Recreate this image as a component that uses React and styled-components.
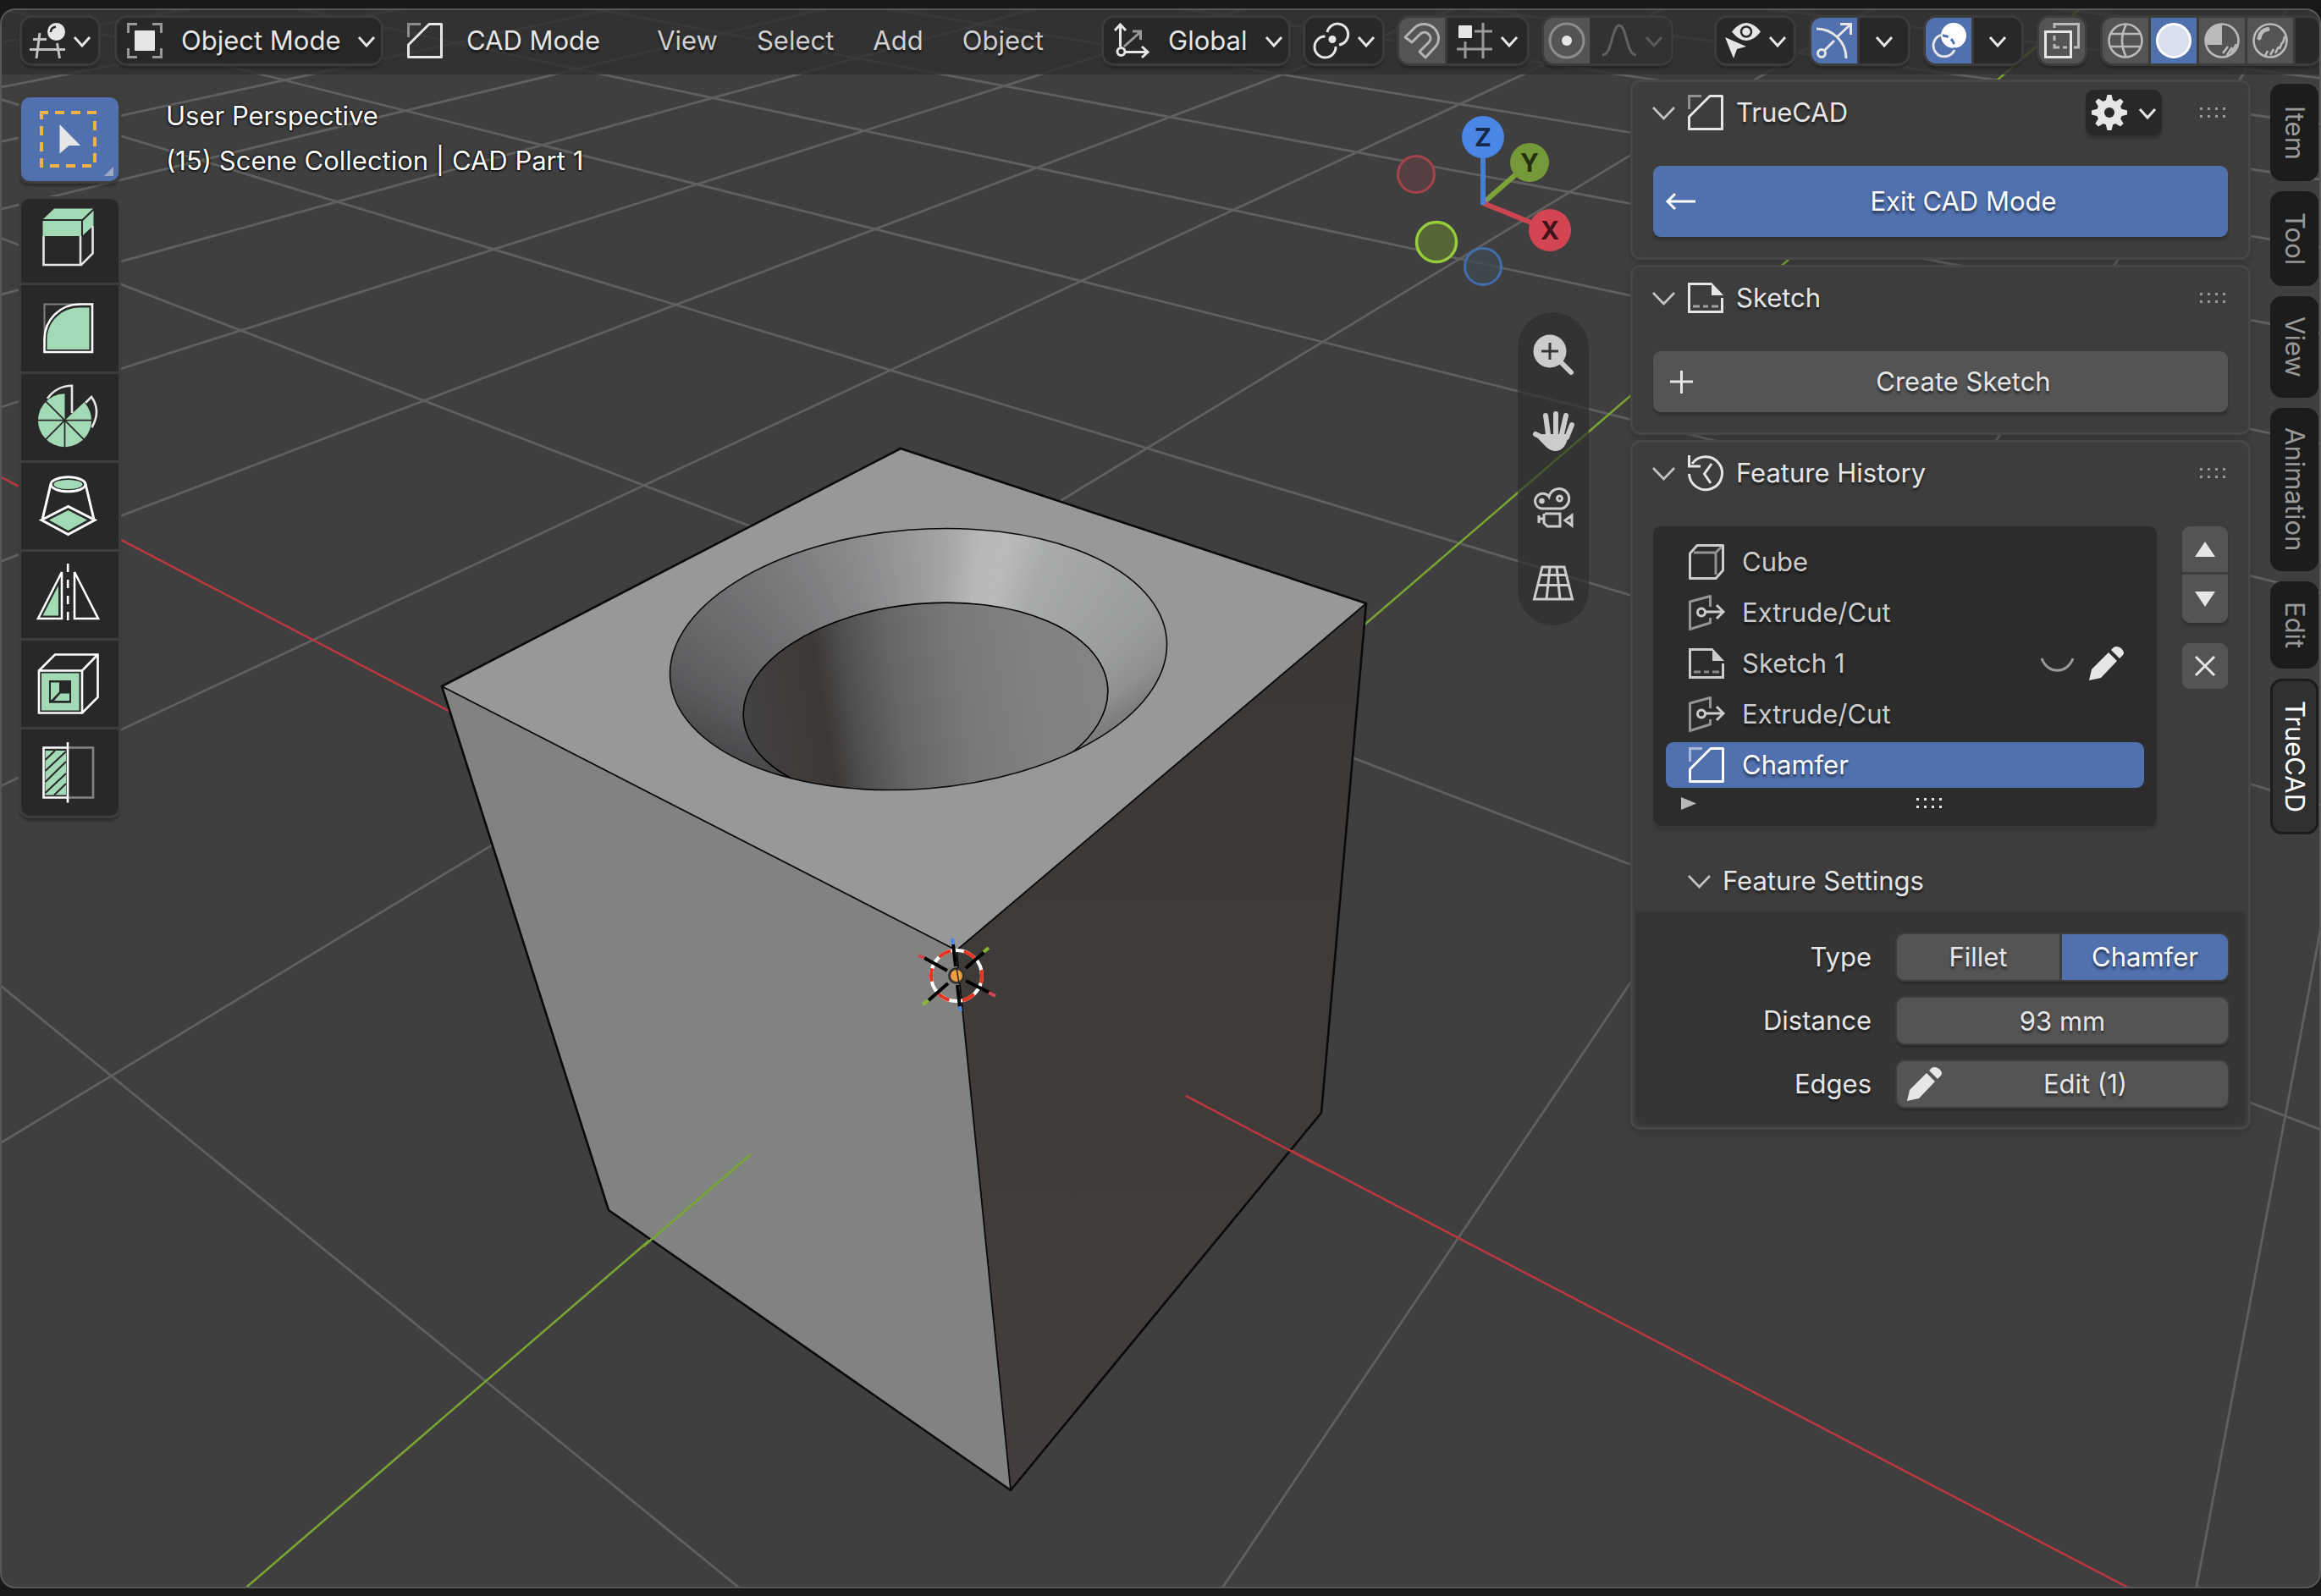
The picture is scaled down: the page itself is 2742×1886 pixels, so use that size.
import { useState } from 'react'
import styled, { createGlobalStyle, css } from 'styled-components'

const GlobalStyle = createGlobalStyle`
  * {
    box-sizing: border-box;
  }
  body {
    margin: 0;
    background: #181818;
    color: #e6e6e6;
    font-family: Inter, 'Liberation Sans', sans-serif;
    font-size: 31px;
    line-height: 40px;
  }
  button,
  input {
    margin: 0;
    padding: 0;
    border: 0;
    background: none;
    color: inherit;
    font: inherit;
    text-shadow: inherit;
  }
  svg {
    display: block;
    flex: none;
  }
`

/* ---------- window frame ---------- */

const Window = styled.div`
  display: flex;
  flex-direction: column;
  min-height: 100vh;
  padding: 10px 0 9px;
`

const Viewport = styled.main`
  position: relative;
  display: flex;
  flex: 1;
  flex-direction: column;
  overflow: hidden;
  border: 2px solid #585858;
  border-radius: 18px;
  background: #3f3f3f;
`

const SceneSvg = styled.svg`
  position: absolute;
  inset: 0;
  width: 100%;
  height: 100%;
`

const Body = styled.div`
  position: relative;
  display: flex;
  align-items: flex-start;
  padding: 6px 1px 0 23px;
`

/* ---------- header ---------- */

const Header = styled.header`
  position: relative;
  display: flex;
  align-items: center;
  height: 76px;
  padding: 0 0 4px 24px;
  background: rgba(48, 48, 48, 0.8);
  text-shadow: 0 3px 3px rgba(0, 0, 0, 0.6);
  white-space: nowrap;
`

const HeaderGroup = styled.div`
  display: flex;
  align-items: center;
  gap: ${({ $gap }) => $gap || 21}px;
  margin-left: ${({ $push }) => ($push ? 'auto' : '0')};
  margin-right: ${({ $after }) => $after || 0}px;
`

const Segments = styled.div`
  display: flex;
  gap: 3px;
  height: 54px;
  border-radius: 12px;
  background: ${({ $disabled }) => ($disabled ? '#343434' : '#3b3b3b')};
  box-shadow: 0 0 0 3px #3c3c3c, 0 4px 3px 2px rgba(0, 0, 0, 0.25);
`

const Segment = styled.button`
  display: flex;
  align-items: center;
  justify-content: center;
  gap: 10px;
  width: ${({ $width }) => $width}px;
  background: ${({ $tone }) =>
    ({ dark: '#282828', light: '#545454', active: '#5070ae', off: '#323232' })[$tone || 'dark']};

  &:first-child {
    border-radius: 12px 0 0 12px;
  }
  &:last-child {
    border-radius: 0 12px 12px 0;
  }
  &:only-child {
    border-radius: 12px;
  }
`

const SegmentText = styled.span`
  flex: 1;
  margin-left: 12px;
  text-align: left;
`

const WideSegment = styled(Segment)`
  padding: 0 7px 0 12px;
`

const ModeLabel = styled.div`
  display: flex;
  align-items: center;
  gap: 28px;
  margin: 0 67px 0 31px;
`

const Menus = styled.nav`
  display: flex;
  gap: 46px;
  color: #d0d0d0;
`

/* ---------- tools on the left ---------- */

const Tools = styled.div`
  display: flex;
  flex-direction: column;
  gap: 21px;
  width: 115px;
  margin-top: 21px;
`

const ToolGroup = styled.div`
  display: flex;
  flex-direction: column;
  gap: 3px;
  border-radius: 10px;
  background: #3d3d3d;
  box-shadow: 0 0 0 3px #3d3d3d, 0 4px 3px 2px rgba(0, 0, 0, 0.3);
`

const Tool = styled.button`
  position: relative;
  display: flex;
  align-items: center;
  justify-content: center;
  height: 102px;
  padding-right: 2px;
  background: ${({ $active }) => ($active ? '#5070ae' : '#282828')};

  &:first-child {
    height: 99px;
    border-radius: 10px 10px 0 0;
  }
  &:last-child {
    border-radius: 0 0 10px 10px;
  }
  &:only-child {
    border-radius: 10px;
  }
`

const MoreCorner = styled.span`
  position: absolute;
  right: 6px;
  bottom: 6px;
  width: 11px;
  height: 11px;
  background: #9da9c2;
  clip-path: polygon(100% 0, 100% 100%, 0 100%);
`

const SceneInfo = styled.div`
  flex: 1;
  margin: 16px 0 0 56px;
  color: #fff;
  line-height: 53px;
  text-shadow: 0 0 3px #000, 0 1px 3px #000;
`

/* ---------- gizmo and navigation ---------- */

const NavColumn = styled.div`
  display: flex;
  flex-direction: column;
  width: 227px;
  margin: 42px 49px 0 0;
`

const NavPill = styled.div`
  display: flex;
  flex-direction: column;
  align-items: center;
  gap: 42px;
  align-self: flex-end;
  width: 84px;
  margin-top: 31px;
  padding: 26px 0;
  border-radius: 42px;
  background: rgba(45, 45, 45, 0.65);
`

const NavButton = styled.button`
  width: 48px;
  height: 48px;
`

/* ---------- sidebar ---------- */

const Sidebar = styled.aside`
  display: flex;
  flex-direction: column;
  gap: 6px;
  width: 733px;
  text-shadow: 0 3px 3px rgba(0, 0, 0, 0.55);
`

const PanelBox = styled.section`
  border: 3px solid #474747;
  border-radius: 12px;
  background: #3d3d3d;
  box-shadow: 0 3px 8px rgba(0, 0, 0, 0.2);
`

const PanelHeader = styled.div`
  display: flex;
  align-items: center;
  gap: 15px;
  height: 72px;
  padding: 0 27px 0 23px;
`

const PanelTitle = styled.span`
  flex: 1;
`

const PanelBody = styled.div`
  padding: 27px 24px 24px;
`

const DropButton = styled.button`
  display: flex;
  align-items: center;
  justify-content: center;
  gap: 14px;
  width: 90px;
  height: 54px;
  margin-right: 30px;
  border-radius: 10px;
  background: #282828;
  box-shadow: 0 4px 3px rgba(0, 0, 0, 0.2);
`

const ActionButton = styled.button`
  display: flex;
  align-items: center;
  width: 100%;
  height: ${({ $tall }) => ($tall ? 84 : 72)}px;
  padding-left: 12px;
  border-radius: 9px;
  background: ${({ $primary }) => ($primary ? '#5070ae' : '#545454')};
  color: ${({ $primary }) => ($primary ? '#fff' : '#e6e6e6')};
  box-shadow: 0 4px 3px rgba(0, 0, 0, 0.2);

  span {
    flex: 1;
  }
`

const HistoryArea = styled.div`
  display: flex;
  gap: 30px;
  padding: 27px 24px 0;
`

const FeatureList = styled.div`
  display: flex;
  flex: 1;
  flex-direction: column;
  gap: 6px;
  padding: 15px 15px 0;
  border-radius: 9px;
  background: #2c2c2c;
  box-shadow: 0 5px 2px #373737;
  color: #cccccc;
`

const FeatureRow = styled.div`
  display: flex;
  align-items: center;
  height: 54px;
  padding: 0 23px 0 27px;
  border-radius: 9px;

  ${({ $selected }) =>
    $selected &&
    css`
      background: #5070ae;
      color: #fff;
    `}
`

const FeatureName = styled.button`
  display: flex;
  flex: 1;
  align-items: center;
  gap: 21px;
`

const RowActions = styled.div`
  display: flex;
  align-items: center;
  gap: 18px;
  color: #e6e6e6;
`

const ListFooter = styled.div`
  display: flex;
  align-items: center;
  justify-content: space-between;
  height: 39px;
  padding: 0 239px 15px 18px;
`

const ListSide = styled.div`
  display: flex;
  flex-direction: column;
  gap: 24px;
  width: 54px;
  color: #e6e6e6;
`

const SideStack = styled.div`
  display: flex;
  flex-direction: column;
  gap: 3px;
  box-shadow: 0 4px 3px rgba(0, 0, 0, 0.2);
  border-radius: 9px;
`

const SideButton = styled.button`
  display: flex;
  align-items: center;
  justify-content: center;
  height: ${({ $height }) => $height || 54}px;
  border-radius: ${({ $round }) => $round || '9px'};
  background: #545454;
`

const SettingsHeader = styled.div`
  display: flex;
  align-items: center;
  gap: 14px;
  height: 72px;
  margin-top: 29px;
  padding-left: 65px;
`

const Settings = styled.div`
  display: flex;
  flex-direction: column;
  gap: 21px;
  margin: 0 3px 3px;
  padding: 27px 21px 21px;
  border-radius: 0 0 10px 10px;
  background: #353535;
`

const Field = styled.div`
  display: grid;
  grid-template-columns: 1fr 391px;
  gap: 30px;
  align-items: center;
  height: 54px;

  label,
  > span {
    text-align: right;
  }
`

const fieldBox = css`
  width: 100%;
  height: 54px;
  border-radius: 9px;
  background: #545454;
  box-shadow: 0 0 0 2px #3d3d3d, 0 4px 2px 1px rgba(0, 0, 0, 0.2);
`

const Switch = styled.div`
  ${fieldBox}
  display: grid;
  grid-template-columns: 192px 1fr;
  gap: 3px;
  background: #3d3d3d;
`

const SwitchOption = styled.button`
  background: ${({ $on }) => ($on ? '#5070ae' : '#545454')};
  color: ${({ $on }) => ($on ? '#fff' : '#e6e6e6')};

  &:first-child {
    border-radius: 9px 0 0 9px;
  }
  &:last-child {
    border-radius: 0 9px 9px 0;
  }
`

const NumberInput = styled.input`
  ${fieldBox}
  text-align: center;
`

const EditButton = styled.button`
  ${fieldBox}
  display: flex;
  align-items: center;
  padding-left: 12px;

  span {
    flex: 1;
  }
`

/* ---------- tabs ---------- */

const Tabs = styled.nav`
  display: flex;
  flex-direction: column;
  gap: 12px;
  width: 57px;
  margin: 5px 0 0 23px;
`

const Tab = styled.button`
  display: flex;
  align-items: center;
  justify-content: center;
  height: ${({ $height }) => $height}px;
  border: 3px solid #1c1c1c;
  border-radius: 14px;
  background: ${({ $active }) => ($active ? '#303030' : '#1c1c1c')};
  color: ${({ $active }) => ($active ? '#fff' : '#999')};
  writing-mode: vertical-rl;
`

/* ---------- icons ---------- */

const Icon = ({ w = 42, h = 42, sw = 3, children }) => (
  <svg
    width={w}
    height={h}
    viewBox={`0 0 ${w} ${h}`}
    fill='none'
    stroke='currentColor'
    strokeWidth={sw}
    overflow='visible'
    aria-hidden='true'
  >
    {children}
  </svg>
)

const Chevron = () => (
  <Icon w={20} h={14}>
    <path d='M1 3 10 13 19 3' />
  </Icon>
)

const PanelChevron = () => (
  <Icon w={27} h={15}>
    <path d='M1 1 13.500 14 26 1' stroke='#c4c4c4' strokeWidth='2.600' />
  </Icon>
)

const ChamferIcon = () => (
  <Icon>
    <path d='M16 1.500H1.500V17' opacity='0.5' />
    <path d='M26 1.500H40.500V40.500H1.500V26Z' strokeLinejoin='round' />
  </Icon>
)

const SketchIcon = () => (
  <Icon h={36}>
    <path d='M28 1.500H1.500V34.500H40.500V18' />
    <path d='M28 0 42 15H28Z' fill='currentColor' stroke='none' />
    <path d='M6 28H14M18 28H24M28 28H36' opacity='0.6' />
  </Icon>
)

const HistoryIcon = () => (
  <Icon>
    <path d='M1.500 22A19.500 19.500 0 1 0 5 10' />
    <path d='M1.500 0V13H15' />
    <path d='M28 10 19.500 22 27 33' />
  </Icon>
)

const CubeIcon = () => (
  <Icon>
    <path d='M1.500 11 10 1.500H40.500V31L32 40.500H1.500Z' strokeLinejoin='round' />
    <path d='M6 10H32V36M32 10 39 3' opacity='0.65' />
  </Icon>
)

const ExtrudeIcon = () => (
  <Icon>
    <path d='M25.500 14V1.500L1.500 8V40.500L25.500 33V27' opacity='0.65' strokeLinejoin='round' />
    <circle cx='15' cy='20.500' r='4.500' />
    <path d='M20 20H40M33 12 41 20 33 28' />
  </Icon>
)

const PencilIcon = () => (
  <Icon>
    <path
      d='M0 41 3 28 23 8 33 18 14 38ZM26 5 29 2C35-2 44 7 40 11L36 15Z'
      fill='currentColor'
      stroke='none'
    />
  </Icon>
)

const ClosedEyeIcon = () => (
  <Icon w={39} h={18}>
    <path d='M1 3C8 22 31 22 38 3' stroke='#999' />
  </Icon>
)

const GearIcon = () => (
  <Icon>
    <g fill='currentColor' stroke='none'>
      {[0, 45, 90, 135].map((angle) => (
        <path
          key={angle}
          d='M18.500 0H23.500L25.500 8V34L23.500 42H18.500L16.500 34V8Z'
          transform={`rotate(${angle} 21 21)`}
        />
      ))}
      <circle cx='21' cy='21' r='15' />
    </g>
    <circle cx='21' cy='21' r='6' fill='#282828' stroke='none' />
  </Icon>
)

const DragDots = ({ color = '#999' }) => (
  <Icon w={30} h={12}>
    <g fill={color} stroke='none'>
      {[0, 9, 18, 27].map((x) => (
        <path key={x} d={`M${x} 0h3v3h-3zM${x} 9h3v3h-3z`} />
      ))}
    </g>
  </Icon>
)

const EditorIcon = () => (
  <Icon>
    <path d='M12 12 8 42M32.500 24 35.500 42M4 19.500H20M0 31.500H42' stroke='#c0c0c0' />
    <circle cx='31.500' cy='10.500' r='10.500' fill='currentColor' stroke='none' />
    <path d='M25 11C25 7 28 5 31 4.500' stroke='#282828' strokeWidth='2.500' />
  </Icon>
)

const ObjectIcon = () => (
  <Icon>
    <path
      d='M1.500 12V1.500H12M30 1.500H40.500V12M40.500 30V40.500H30M12 40.500H1.500V30'
      stroke='#999'
    />
    <rect x='9' y='9' width='24' height='24' rx='1' fill='currentColor' stroke='none' />
  </Icon>
)

const AxesIcon = () => (
  <Icon>
    <path d='M12 28 31 11M22 10H31.500V20' stroke='#999' />
    <path d='M7.500 28V2M1 9 7.500 2 14 9M14 34.500H40M33 28 40 34.500 33 41' />
    <circle cx='8.500' cy='34' r='4.500' />
  </Icon>
)

const PivotIcon = () => (
  <Icon>
    <path d='M16 11A12.500 12.500 0 1 1 30 26M13.500 16A12.500 12.500 0 1 0 26 28' />
    <circle cx='22' cy='19.500' r='4.500' fill='currentColor' stroke='none' />
  </Icon>
)

const MagnetIcon = () => (
  <Icon>
    <path
      d='M1 17 12 6C18 0 28 0 35 6C42 13 42 22 37 28L25 41 18 34 29 23C35 17 26 7 19 13L9 23Z'
      stroke='#b4b4b4'
      strokeLinejoin='round'
    />
  </Icon>
)

const SnapIcon = () => (
  <Icon>
    <path d='M31 0V42M21 10H42M0 31H42M10 22V42' stroke='#999' />
    <rect x='2' y='3' width='16' height='15' rx='1' fill='currentColor' stroke='none' />
  </Icon>
)

const ProportionalIcon = () => (
  <Icon>
    <circle cx='21' cy='21' r='20' stroke='#8c8c8c' />
    <circle cx='21' cy='21' r='6' fill='#e6e6e6' stroke='none' />
  </Icon>
)

const FalloffIcon = () => (
  <Icon>
    <path d='M1 38C13 38 12 3 21 3S29 38 41 38' stroke='#606060' />
  </Icon>
)

const VisibilityIcon = () => (
  <Icon>
    <path
      d='M8 10.500Q16 0 25 0T42 10.500Q34 21 25 21T8 10.500Z'
      fill='currentColor'
      stroke='none'
    />
    <circle cx='25' cy='10.500' r='6' stroke='#282828' strokeWidth='2.500' />
    <path d='M0 17 25 28 14 31 10 42Z' fill='currentColor' stroke='none' />
  </Icon>
)

const GizmoIcon = () => (
  <Icon>
    <path d='M0 7C19 7 35 22 35 42M9 33 21 21M25 16 40 2M28 1.500H40.500V14' />
    <circle cx='6' cy='36' r='4.500' />
  </Icon>
)

const OverlayIcon = () => (
  <Icon>
    <circle cx='27' cy='15' r='15' fill='#fff' stroke='none' />
    <path d='M14 14A13 13 0 1 0 28 32' />
    <path d='M14 15A14 14 0 0 1 28 30' stroke='#5070ae' strokeDasharray='7 4' />
  </Icon>
)

const XrayIcon = () => (
  <Icon>
    <path d='M12 6V1.500H40.500V29H35' opacity='0.7' />
    <rect x='1.500' y='10.500' width='30' height='30' />
    <path d='M12 15V21M12 25V29H18M22 29H27' opacity='0.7' />
  </Icon>
)

const WireIcon = () => (
  <Icon sw={2.6}>
    <g stroke='#bababa'>
      <circle cx='21' cy='21' r='19.500' />
      <path d='M22 1.500Q12 21 22 40.500M4 13H38M4 28H38' />
    </g>
  </Icon>
)

const SolidIcon = () => (
  <Icon>
    <circle cx='21' cy='21' r='19.500' fill='#d8dfee' stroke='#fff' />
  </Icon>
)

const MaterialIcon = () => (
  <Icon sw={2.6}>
    <g stroke='#bababa'>
      <circle cx='21' cy='21' r='19.500' />
      <path d='M21 1.500V26H2A19.500 19.500 0 0 1 21 1.500Z' fill='#bababa' stroke='none' />
      <path d='M22 36 28 28M27 38 33 29M32 36 38 25' />
    </g>
  </Icon>
)

const RenderedIcon = () => (
  <Icon sw={2.6}>
    <g stroke='#bababa'>
      <circle cx='21' cy='21' r='19.500' />
      <path d='M8 18C9 12 13 8 18 7.500' strokeWidth='5' strokeLinecap='round' />
      <path d='M15 39 18 33M21 38 25 31M27 36 31 28M32 31 35 23M36 24 38 16' />
    </g>
  </Icon>
)

const ToolIcon = ({ children }) => (
  <Icon w={78} h={78} sw={2.6}>
    {children}
  </Icon>
)

const GREEN = '#a3dab6'

const polar = (cx, cy, r, deg) => {
  const rad = ((deg - 90) * Math.PI) / 180
  return `${cx + r * Math.cos(rad)} ${cy + r * Math.sin(rad)}`
}

const toolIcons = {
  Extrude: (
    <ToolIcon>
      <g fill={GREEN} stroke='none'>
        <path d='M8 13 21 .5H67L54 13ZM7.500 15H53V33H7.500ZM55 15 67.500 3V20.500L55 32Z' />
      </g>
      <path d='M8.500 33V67H53L66.500 53.500V21M52 33V67' stroke='#e6e6e6' />
    </ToolIcon>
  ),
  Fillet: (
    <ToolIcon>
      <path d='M9.500 54V10.500H52' stroke='#808080' strokeWidth='2' />
      <path d='M51 10.500H66V67H9.500V52C9.500 29 28 10.500 51 10.500Z' stroke='#fff' />
      <path d='M51 14.500H62.500V64H12.500V52C12.500 31 30 14.500 51 14.500Z' fill={GREEN} stroke='none' />
    </ToolIcon>
  ),
  Revolve: (
    <ToolIcon>
      <path d='M13 17C20 7 31 1.700 42 1.700V34M58 22 65 15C73 26 73 38 65.500 51' stroke='#e6e6e6' />
      <path
        d={`M33.500 42.700 L${polar(33.5, 42.7, 31.5, 47)} A31.500 31.500 0 1 1 ${polar(33.5, 42.7, 31.5, 0)}Z`}
        fill={GREEN}
        stroke='none'
      />
      {[90, 135, 180, 225, 270, 315].map((deg) => (
        <path
          key={deg}
          d={`M33.500 42.700 L${polar(33.5, 42.7, 33, deg)}`}
          stroke='#282828'
          strokeWidth='1.800'
        />
      ))}
    </ToolIcon>
  ),
  Loft: (
    <ToolIcon>
      <g stroke='#fff' strokeWidth='3'>
        <ellipse cx='37.500' cy='13.300' rx='20.500' ry='8.500' />
        <path d='M17 13 7 55M58 13 68 55M6 55.500 37.500 39.500 69 55.500 37.500 72.500Z' />
      </g>
      <ellipse cx='37.500' cy='13.500' rx='17' ry='5.500' fill={GREEN} stroke='none' />
      <path d='M15 55.500 37.500 44 60 55.500 37.500 68Z' fill={GREEN} stroke='none' />
    </ToolIcon>
  ),
  Mirror: (
    <ToolIcon>
      <path d='M30 12V67H2ZM45 12V67H73Z' stroke='#fff' />
      <path d='M37.200 2V69' stroke='#fff' strokeDasharray='10 9' />
      <path d='M26 28V63.500H7.500Z' fill={GREEN} stroke='none' />
    </ToolIcon>
  ),
  Shell: (
    <ToolIcon>
      <path d='M3 23.500H54V73.500H3ZM3 23.500 22 4.500H72.500V55L54 73.500M54 23.500 72.500 4.500' stroke='#fff' />
      <g fill={GREEN} stroke='none'>
        <path d='M6 26.500H50.500V70.500H6ZM15 35V61.700H41V35Z' fillRule='evenodd' />
        <path d='M17 37.500H27V48.500L18 58H17ZM21 59 28.500 50.500H39V59Z' />
      </g>
    </ToolIcon>
  ),
  Section: (
    <ToolIcon>
      <path d='M37 9.500H67V68.500H37' stroke='#858585' />
      <path d='M10.500 13H35V65.500H10.500Z' fill={GREEN} stroke='none' />
      <path
        d='M10.500 24 22 13M10.500 37 35 14M10.500 50 35 26M10.500 63 35 40M21 65.500 35 52'
        stroke='#282828'
        strokeWidth='2'
      />
      <path d='M37 9.500H8.500V68.500H37M37 3V74.500' stroke='#fff' />
    </ToolIcon>
  ),
}

const SelectIcon = () => (
  <ToolIcon>
    <rect
      x='6'
      y='7'
      width='63'
      height='63'
      stroke='#f3b344'
      strokeWidth='4'
      strokeDasharray='11 8'
      strokeDashoffset='3'
    />
    <path d='M27.500 21 52 46H38.500L27.500 55.500Z' fill='#e6e6e6' stroke='none' />
  </ToolIcon>
)

/* ---------- 3D scene ---------- */

// ground plane to screen: X and Y are the images of the unit steps,
// A and B the perspective divisors of each direction
const ORIGIN = [1130, 1153.3]
const X_STEP = [322, 79.6]
const Y_STEP = [685.5, -111]
const A = -0.1572
const B = 0.2254

const project = (u, v) => {
  const d = 1 + A * u + B * v
  return [
    (ORIGIN[0] + u * X_STEP[0] + v * Y_STEP[0]) / d,
    (ORIGIN[1] + u * X_STEP[1] + v * Y_STEP[1]) / d,
  ]
}

const NEAR = 0.12
const FAR = 60

const range = (from, to) => Array.from({ length: to - from + 1 }, (_, i) => from + i)

const gridLine = (fixed, value) => {
  const [p, q] =
    fixed === 'u'
      ? [project(value, (NEAR - 1 - A * value) / B), project(value, FAR)]
      : [project((NEAR - 1 - B * value) / A, value), project(-FAR, value)]
  return `M${p.join(' ')}L${q.join(' ')}`
}

// shading of the chamfered rim, in degrees around the tip of its cone
const TIP = [1110, 975]
const RIM = [
  [-120, 72, 72, 75],
  [-71, 75, 75, 78],
  [-66, 82, 82, 85],
  [-60, 93, 93, 96],
  [-48, 107, 107, 110],
  [-31, 123, 124, 126],
  [-19, 136, 137, 139],
  [-5, 154, 155, 156],
  [1, 164, 165, 165],
  [8, 183, 185, 184],
  [14, 184, 186, 185],
  [22, 168, 170, 170],
  [45, 154, 156, 156],
  [53, 143, 144, 144],
  [59, 125, 127, 126],
  [120, 120, 122, 121],
]

const rimColor = (deg) => {
  const i = Math.max(1, RIM.findIndex(([d]) => d >= deg))
  const [d0, ...c0] = RIM[i - 1]
  const [d1, ...c1] = RIM[i]
  const t = (deg - d0) / (d1 - d0)
  return `rgb(${c0.map((c, k) => Math.round(c + (c1[k] - c) * t)).join(',')})`
}

const Scene = () => (
  <SceneSvg viewBox='2 12 2738 1863' preserveAspectRatio='xMidYMid slice' fill='none'>
    <defs>
      <linearGradient id='hole' gradientUnits='userSpaceOnUse' x1='878' y1='840' x2='1309' y2='810'>
        <stop offset='0' stopColor='#444142' />
        <stop offset='0.22' stopColor='#3b3835' />
        <stop offset='0.3' stopColor='#504f4f' />
        <stop offset='0.42' stopColor='#646565' />
        <stop offset='0.6' stopColor='#777977' />
        <stop offset='0.8' stopColor='#808280' />
        <stop offset='1' stopColor='#828583' />
      </linearGradient>
      <linearGradient id='dark' x1='0' y1='0' x2='0' y2='1'>
        <stop offset='0' stopColor='#3a3836' />
        <stop offset='1' stopColor='#433e3d' />
      </linearGradient>
      <clipPath id='rim'>
        <ellipse cx='1085' cy='779' rx='294.200' ry='153.200' transform='rotate(-4.640 1085 779)' />
      </clipPath>
    </defs>

    <g stroke='#606060' strokeWidth='2.800'>
      {range(-FAR, 4).map((u) => u !== 0 && <path key={`u${u}`} d={gridLine('u', u)} />)}
      {range(-3, FAR).map((v) => v !== 0 && <path key={`v${v}`} d={gridLine('v', v)} />)}
    </g>
    <path d={gridLine('v', 0)} stroke='#b8383f' strokeWidth='2.600' />
    <path d={gridLine('u', 0)} stroke='#79a533' strokeWidth='2.600' />

    <path d='M522 811 1130 1123 1194 1761 719 1430Z' fill='#818381' />
    <path d='M1130 1123 1614 713 1561 1315 1194 1761Z' fill='url(#dark)' />
    <path d='M1064 530 1614 713 1130 1123 522 811Z' fill='#97989a' />
    <g clipPath='url(#rim)'>
      {range(-119, 118).map((deg) => (
        <path
          key={deg}
          d={`M${TIP.join(' ')}L${polar(...TIP, 600, deg - 0.3)}L${polar(...TIP, 600, deg + 1.5)}Z`}
          fill={rimColor(deg)}
        />
      ))}
      <ellipse
        cx='1093.500'
        cy='830.400'
        rx='215.900'
        ry='117.200'
        transform='rotate(-5.080 1093.500 830.400)'
        fill='url(#hole)'
        stroke='#000'
        strokeWidth='1.600'
      />
    </g>
    <g stroke='#0a0a0a' strokeLinejoin='round'>
      <ellipse
        cx='1085'
        cy='779'
        rx='294.200'
        ry='153.200'
        transform='rotate(-4.640 1085 779)'
        strokeWidth='1.600'
      />
      <path d='M522 811 1130 1123 1614 713M1130 1123 1194 1761' strokeWidth='1.800' />
      <path d='M1064 530 1614 713 1561 1315 1194 1761 719 1430 522 811Z' strokeWidth='2.600' />
    </g>

    <path d='M1401 1295 1561 1379' stroke='#b8383f' strokeWidth='2.600' />
    <path d='M887 1364 760 1473' stroke='#79a533' strokeWidth='2.600' />

    <g transform='translate(1130 1153)'>
      <circle r='30' stroke='#fff' strokeWidth='4' />
      <circle r='30' stroke='#e8321f' strokeWidth='4' strokeDasharray='15.700 15.700' strokeDashoffset='7' />
      <g strokeWidth='4'>
        <path d='M-4-37-1-11M1 11 4 38M-38-21-11-6M11 6 39 20M11-9 34-29M-10 9-34 30' stroke='#000' />
        <path d='M-5-44-4-37M4 36 5 42' stroke='#4a86e8' />
        <path d='M-45-24-38-21M38 20 46 24' stroke='#d04455' />
        <path d='M32-28 38-33M-33 29-40 34' stroke='#86b832' />
      </g>
      <circle r='8.500' fill='#f29d3e' stroke='#333' strokeWidth='3' />
      <path d='M0-9 3 9' stroke='#222' strokeWidth='1.500' />
    </g>
  </SceneSvg>
)

const AxisGizmo = () => (
  <svg width='208' height='202' viewBox='1650 136 208 202' fill='none'>
    <circle cx='1673' cy='206' r='21.500' fill='#543f41' stroke='#a8434e' strokeWidth='3' />
    <circle cx='1752' cy='315' r='21.500' fill='#404852' fillOpacity='0.8' stroke='#426eae' strokeWidth='3' />
    <g strokeWidth='6'>
      <path d='M1752 240 1807 192' stroke='#7ba337' />
      <path d='M1752 240 1831 272' stroke='#cb4553' />
      <path d='M1752 162V242' stroke='#4780d2' />
    </g>
    <circle cx='1807' cy='192' r='23' fill='#759838' />
    <circle cx='1752' cy='162' r='25' fill='#4a86e6' />
    <circle cx='1831' cy='272' r='25' fill='#d34553' />
    <circle cx='1697' cy='286' r='23.500' fill='#566536' stroke='#97cd3b' strokeWidth='3.500' />
    <g fontSize='30' fontWeight='700' textAnchor='middle'>
      <text x='1752' y='173' fill='#16294a'>Z</text>
      <text x='1807' y='203' fill='#24300f'>Y</text>
      <text x='1831' y='283' fill='#42131a'>X</text>
    </g>
  </svg>
)

const navIcons = {
  Zoom: (
    <Icon w={48} h={48}>
      <circle cx='20' cy='20' r='19.500' fill='#cccccc' stroke='none' />
      <path d='M33 33 45 45' stroke='#cccccc' strokeWidth='6' strokeLinecap='round' />
      <path d='M10 20H30M20 10V30' stroke='#363636' />
    </Icon>
  ),
  Pan: (
    <Icon w={48} h={48}>
      <path
        d='M3 28 13 33M15 6 18 28M27 4V28M39 6 34 28M46 17 40 32'
        stroke='#cccccc'
        strokeWidth='6'
        strokeLinecap='round'
      />
      <path d='M12 28H42C41 38 36 48 27 48S14 41 3 30Z' fill='#cccccc' stroke='none' />
    </Icon>
  ),
  Camera: (
    <Icon w={48} h={48}>
      <g stroke='#cccccc'>
        <path d='M10 26A9 9 0 1 1 19 12A12 12 0 1 1 34 26Z' />
        <circle cx='31.500' cy='14' r='3' />
        <circle cx='10.500' cy='17' r='1.800' fill='#cccccc' />
        <path d='M14 32H32V47H17L13 43V32M13 38H7M7 34V43M46 34V46L38 40Z' />
      </g>
    </Icon>
  ),
  Grid: (
    <Icon w={48} h={48}>
      <path
        d='M11 5H37L46.500 43H1.500ZM8 14.500H40M5 26.500H43M20 5 16 43M28 5 32 43'
        stroke='#cccccc'
      />
    </Icon>
  ),
}

/* ---------- panels ---------- */

const Panel = ({ title, icon, extra, children }) => (
  <PanelBox>
    <PanelHeader>
      <PanelChevron />
      {icon}
      <PanelTitle>{title}</PanelTitle>
      {extra}
      <DragDots />
    </PanelHeader>
    {children}
  </PanelBox>
)

const features = [
  { name: 'Cube', icon: <CubeIcon /> },
  { name: 'Extrude/Cut', icon: <ExtrudeIcon /> },
  { name: 'Sketch 1', icon: <SketchIcon />, editable: true },
  { name: 'Extrude/Cut', icon: <ExtrudeIcon /> },
  { name: 'Chamfer', icon: <ChamferIcon /> },
]

const tabs = [
  ['Item', 115],
  ['Tool', 112],
  ['View', 120],
  ['Animation', 193],
  ['Edit', 103],
  ['TrueCAD', 184],
]

const HeaderBar = () => (
  <Header>
    <HeaderGroup $gap={22}>
      <Segments>
        <Segment $width={90} aria-label='Editor type'>
          <EditorIcon />
          <Chevron />
        </Segment>
      </Segments>
      <Segments>
        <WideSegment $width={312}>
          <ObjectIcon />
          <SegmentText>Object Mode</SegmentText>
          <Chevron />
        </WideSegment>
      </Segments>
    </HeaderGroup>
    <ModeLabel>
      <ChamferIcon />
      CAD Mode
    </ModeLabel>
    <Menus>
      {['View', 'Select', 'Add', 'Object'].map((item) => (
        <button key={item}>{item}</button>
      ))}
    </Menus>
    <HeaderGroup $push $gap={20} $after={54}>
      <Segments>
        <WideSegment $width={218}>
          <AxesIcon />
          <SegmentText>Global</SegmentText>
          <Chevron />
        </WideSegment>
      </Segments>
      <Segments>
        <Segment $width={91} aria-label='Pivot point'>
          <PivotIcon />
          <Chevron />
        </Segment>
      </Segments>
      <Segments>
        <Segment $width={54} $tone='light' aria-label='Snap'>
          <MagnetIcon />
        </Segment>
        <Segment $width={94} aria-label='Snap to'>
          <SnapIcon />
          <Chevron />
        </Segment>
      </Segments>
      <Segments $disabled>
        <Segment $width={54} $tone='light' aria-label='Proportional editing'>
          <ProportionalIcon />
        </Segment>
        <Segment $width={93} $tone='off' aria-label='Falloff' style={{ color: '#5a5a5a' }}>
          <FalloffIcon />
          <Chevron />
        </Segment>
      </Segments>
    </HeaderGroup>
    <HeaderGroup>
      <Segments>
        <Segment $width={91} aria-label='Visibility'>
          <VisibilityIcon />
          <Chevron />
        </Segment>
      </Segments>
      <Segments>
        <Segment $width={54} $tone='active' aria-label='Gizmos'>
          <GizmoIcon />
        </Segment>
        <Segment $width={57} aria-label='Gizmo options'>
          <Chevron />
        </Segment>
      </Segments>
      <Segments>
        <Segment $width={54} $tone='active' aria-label='Overlays'>
          <OverlayIcon />
        </Segment>
        <Segment $width={56} aria-label='Overlay options'>
          <Chevron />
        </Segment>
      </Segments>
      <Segments>
        <Segment $width={54} $tone='light' aria-label='X-ray'>
          <XrayIcon />
        </Segment>
      </Segments>
      <Segments>
        <Segment $width={54} $tone='light' aria-label='Wireframe'>
          <WireIcon />
        </Segment>
        <Segment $width={54} $tone='active' aria-label='Solid'>
          <SolidIcon />
        </Segment>
        <Segment $width={54} $tone='light' aria-label='Material preview'>
          <MaterialIcon />
        </Segment>
        <Segment $width={54} $tone='light' aria-label='Rendered'>
          <RenderedIcon />
        </Segment>
        <Segment $width={28} aria-label='Shading options' />
      </Segments>
    </HeaderGroup>
  </Header>
)

const HistoryPanel = () => {
  const [selected, setSelected] = useState(4)
  const [type, setType] = useState('Chamfer')
  const [distance, setDistance] = useState('93 mm')

  return (
    <Panel title='Feature History' icon={<HistoryIcon />}>
      <HistoryArea>
        <FeatureList>
          {features.map(({ name, icon, editable }, i) => (
            <FeatureRow key={i} $selected={i === selected}>
              <FeatureName onClick={() => setSelected(i)}>
                {icon}
                {name}
              </FeatureName>
              {editable && (
                <RowActions>
                  <button aria-label='Show sketch'>
                    <ClosedEyeIcon />
                  </button>
                  <button aria-label='Edit sketch'>
                    <PencilIcon />
                  </button>
                </RowActions>
              )}
            </FeatureRow>
          ))}
          <ListFooter>
            <Icon w={18} h={15}>
              <path d='M0 0 18 7.500 0 15Z' fill='#b8b8b8' stroke='none' />
            </Icon>
            <DragDots color='#e6e6e6' />
          </ListFooter>
        </FeatureList>
        <ListSide>
          <SideStack>
            <SideButton $round='9px 9px 0 0' aria-label='Move up'>
              <Icon w={24} h={18}>
                <path d='M12 0 24 18H0Z' fill='currentColor' stroke='none' />
              </Icon>
            </SideButton>
            <SideButton $round='0 0 9px 9px' $height={57} aria-label='Move down'>
              <Icon w={24} h={18}>
                <path d='M0 0H24L12 18Z' fill='currentColor' stroke='none' />
              </Icon>
            </SideButton>
          </SideStack>
          <SideButton aria-label='Remove'>
            <Icon w={24} h={24}>
              <path d='M1 1 23 23M23 1 1 23' />
            </Icon>
          </SideButton>
        </ListSide>
      </HistoryArea>
      <SettingsHeader>
        <PanelChevron />
        Feature Settings
      </SettingsHeader>
      <Settings>
        <Field>
          <span id='type-label'>Type</span>
          <Switch role='group' aria-labelledby='type-label'>
            {['Fillet', 'Chamfer'].map((option) => (
              <SwitchOption
                key={option}
                $on={option === type}
                aria-pressed={option === type}
                onClick={() => setType(option)}
              >
                {option}
              </SwitchOption>
            ))}
          </Switch>
        </Field>
        <Field>
          <label htmlFor='distance'>Distance</label>
          <NumberInput
            id='distance'
            value={distance}
            onChange={(e) => setDistance(e.target.value)}
          />
        </Field>
        <Field>
          <label htmlFor='edges'>Edges</label>
          <EditButton id='edges'>
            <PencilIcon />
            <span>Edit (1)</span>
          </EditButton>
        </Field>
      </Settings>
    </Panel>
  )
}

function App() {
  const [tab, setTab] = useState('TrueCAD')

  return (
    <Window>
      <GlobalStyle />
      <Viewport>
        <Scene />
        <HeaderBar />
        <Body>
          <Tools>
            <ToolGroup>
              <Tool $active aria-label='Select box'>
                <SelectIcon />
                <MoreCorner />
              </Tool>
            </ToolGroup>
            <ToolGroup>
              {Object.entries(toolIcons).map(([name, icon]) => (
                <Tool key={name} aria-label={name}>
                  {icon}
                </Tool>
              ))}
            </ToolGroup>
          </Tools>
          <SceneInfo>
            <div>User Perspective</div>
            <div>(15) Scene Collection | CAD Part 1</div>
          </SceneInfo>
          <NavColumn>
            <AxisGizmo />
            <NavPill>
              {Object.entries(navIcons).map(([name, icon]) => (
                <NavButton key={name} aria-label={name}>
                  {icon}
                </NavButton>
              ))}
            </NavPill>
          </NavColumn>
          <Sidebar>
            <Panel
              title='TrueCAD'
              icon={<ChamferIcon />}
              extra={
                <DropButton aria-label='Settings'>
                  <GearIcon />
                  <Chevron />
                </DropButton>
              }
            >
              <PanelBody>
                <ActionButton $tall $primary>
                  <Icon>
                    <path d='M5 21H38M14 12 5 21 14 30' />
                  </Icon>
                  <span>Exit CAD Mode</span>
                </ActionButton>
              </PanelBody>
            </Panel>
            <Panel title='Sketch' icon={<SketchIcon />}>
              <PanelBody>
                <ActionButton>
                  <Icon>
                    <path d='M8 21H35M21.500 8V35' />
                  </Icon>
                  <span>Create Sketch</span>
                </ActionButton>
              </PanelBody>
            </Panel>
            <HistoryPanel />
          </Sidebar>
          <Tabs>
            {tabs.map(([name, height]) => (
              <Tab
                key={name}
                $height={height}
                $active={name === tab}
                onClick={() => setTab(name)}
              >
                {name}
              </Tab>
            ))}
          </Tabs>
        </Body>
      </Viewport>
    </Window>
  )
}

export default App
